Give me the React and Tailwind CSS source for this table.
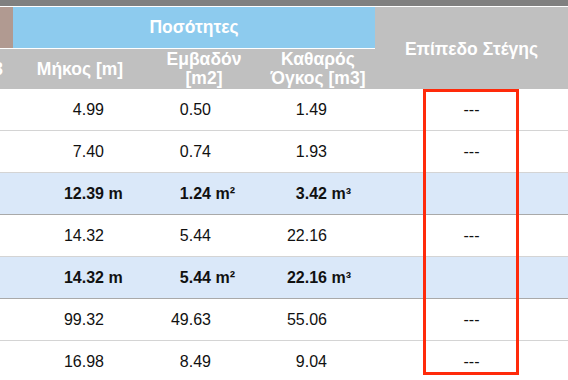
import React from 'react';

const rows = [
  { a: '4.99', b: '0.50', c: '1.49', roof: '---' },
  { a: '7.40', b: '0.74', c: '1.93', roof: '---' },
  { a: '12.39', b: '1.24', c: '3.42', total: true },
  { a: '14.32', b: '5.44', c: '22.16', roof: '---' },
  { a: '14.32', b: '5.44', c: '22.16', total: true },
  { a: '99.32', b: '49.63', c: '55.06', roof: '---' },
  { a: '16.98', b: '8.49', c: '9.04', roof: '---' },
];

function Num({ value, unit, pad, bold }) {
  return (
    <div className="flex items-center h-full">
      <span className="text-right whitespace-nowrap" style={{ width: pad }}>{value}</span>
      {bold && unit && <span className="whitespace-nowrap">&nbsp;{unit}</span>}
    </div>
  );
}

export default function App() {
  return (
    <div className="relative w-[568px] h-[380px] overflow-hidden bg-white text-[#111] font-['Liberation_Sans',Arial,sans-serif] text-[16px]">
      <div className="h-[6px] bg-[#808080]" />
      <div className="h-[1px] bg-white" />

      {/* header */}
      <div className="flex h-[82px] text-[17.5px]">
        <div className="flex flex-col w-[375px]">
          <div className="flex h-[41px]">
            <div className="w-[13px] bg-[#b19a91]" />
            <div className="flex-1 bg-[#8dcbee] flex items-center justify-center text-white font-bold">Ποσότητες</div>
          </div>
          <div className="h-[1px] bg-white" />
          <div className="flex h-[40px] bg-[#c0c0c0] text-white font-bold leading-[19px]">
            <div className="w-[13px] overflow-hidden flex items-center justify-end pr-[10px]">
              <span className="whitespace-nowrap">3</span>
            </div>
            <div className="w-[134px] flex items-center justify-center">Μήκος [m]</div>
            <div className="w-[114px] flex items-center justify-center text-center">Εμβαδόν<br />[m2]</div>
            <div className="w-[114px] flex items-center justify-center text-center">Καθαρός<br />Όγκος [m3]</div>
          </div>
        </div>
        <div className="flex-1 bg-[#c0c0c0] flex items-center justify-center text-white font-bold pt-[2px]">Επίπεδο Στέγης</div>
      </div>

      {/* body */}
      {rows.map((r, i) => (
        <div
          key={i}
          className={`flex h-[42px] border-b ${r.total ? 'bg-[#dae8f9] border-[#a9a9a9] font-bold' : 'border-[#d4d4d4]'}`}
        >
          <div className="w-[13px]" />
          <div className="w-[134px]"><Num value={r.a} unit="m" pad="91px" bold={r.total} /></div>
          <div className="w-[114px]"><Num value={r.b} unit="m²" pad="64px" bold={r.total} /></div>
          <div className="w-[114px]"><Num value={r.c} unit="m³" pad="66px" bold={r.total} /></div>
          <div className="flex-1 flex items-center justify-center">{r.roof}</div>
        </div>
      ))}

      <div className="absolute left-[423px] top-[89px] w-[96px] h-[286px] border-[3px] border-[#ff2a0a] pointer-events-none" />
    </div>
  );
}
